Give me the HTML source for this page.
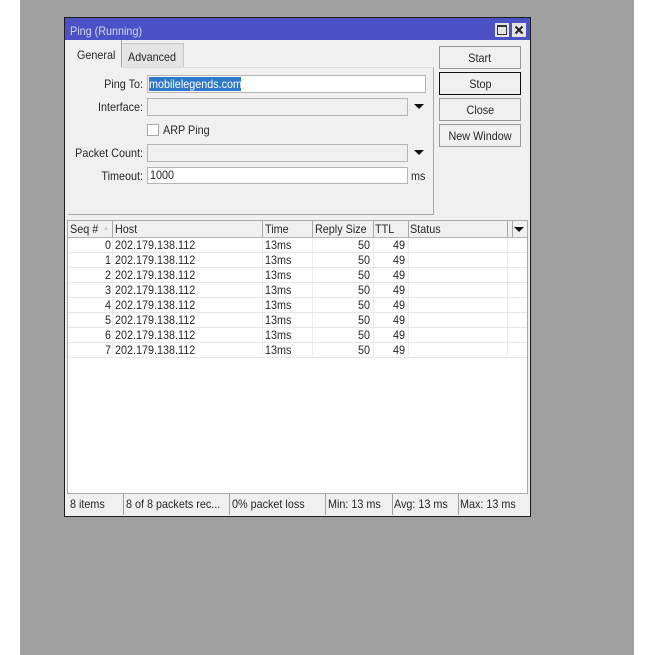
<!DOCTYPE html>
<html><head><meta charset="utf-8"><style>
html,body{margin:0;padding:0;background:#fff}
#p{position:relative;width:655px;height:655px;overflow:hidden;background:#fff;font:12px "Liberation Sans",sans-serif;color:#262626;filter:blur(.2px)}
#p div{position:absolute;box-sizing:border-box}
.t{white-space:nowrap;line-height:14px;height:14px;transform:scaleX(.9);transform-origin:left center}
.r{text-align:right;transform-origin:right center}
.f{background:#f0f0f0;border:1px solid #b4b4b4}
.w{background:#fff;border:1px solid #b4b4b4}
.b{left:439px;width:82px;height:23px;background:#f0f0f0;border:1px solid #999;text-align:center;line-height:23px}
.b span{display:inline-block;transform:scaleX(.9)}
.a{width:0;height:0;border-left:5px solid transparent;border-right:5px solid transparent;border-top:5px solid #111}
.hl{height:1px;background:#e6e6e6;left:68px;width:459px}
.v{width:1px;background:#ececec;top:238px;height:120px}
.hs{width:1px;background:#a8a8a8;top:221px;height:16px}
.ss{width:1px;background:#a0a0a0;top:494px;height:21px}
</style></head><body><div id="p">
<div style="left:20px;top:0;width:614px;height:655px;background:#a0a0a0"></div>
<div style="left:64px;top:17px;width:467px;height:500px;background:#f0f0f0;border:1px solid #1c1c1c"></div>
<div style="left:65px;top:18px;width:465px;height:22px;background:#4a52c5"></div>
<div class="t" style="left:70px;top:24px;color:#d4d7f2">Ping (Running)</div>
<div style="left:495px;top:23px;width:14px;height:14px;background:#e4e4e4"></div>
<div style="left:497px;top:25px;width:10px;height:10px;border:1px solid #333;border-top-width:2px"></div>
<div style="left:512px;top:23px;width:14px;height:14px;background:#e4e4e4"></div>
<svg style="position:absolute;left:512px;top:23px" width="14" height="14"><path d="M3.5 3.5L10.5 10.5M10.5 3.5L3.5 10.5" stroke="#222" stroke-width="2"/></svg>

<div style="left:121px;top:43px;width:63px;height:24px;background:#e4e4e4;border:1px solid #c8c8c8;border-bottom:0"></div>
<div style="left:121px;top:40px;width:1px;height:27px;background:#a8a8a8"></div>
<div class="t" style="left:77px;top:48px">General</div>
<div class="t" style="left:128px;top:50px">Advanced</div>
<div style="left:121px;top:67px;width:313px;height:148px;border-top:1px solid #dcdcdc;border-right:1px solid #a8a8a8"></div>
<div style="left:68px;top:214px;width:366px;height:1px;background:#a8a8a8"></div>

<div class="t r" style="left:40px;width:103px;top:77px">Ping To:</div>
<div class="w" style="left:147px;top:75px;width:279px;height:18px"></div>
<div style="left:149px;top:77px;width:92px;height:14px;background:#2f78c8"></div>
<div class="t" style="left:149px;top:77px;color:#fff">mobilelegends.com</div>

<div class="t r" style="left:40px;width:103px;top:100px">Interface:</div>
<div class="f" style="left:147px;top:98px;width:261px;height:18px"></div>
<div class="a" style="left:414px;top:104px"></div>

<div style="left:147px;top:124px;width:12px;height:12px;background:#fff;border:1px solid #a8a8a8"></div>
<div class="t" style="left:163px;top:123px">ARP Ping</div>

<div class="t r" style="left:40px;width:103px;top:146px">Packet Count:</div>
<div class="f" style="left:147px;top:144px;width:261px;height:18px"></div>
<div class="a" style="left:414px;top:150px"></div>

<div class="t r" style="left:40px;width:103px;top:169px">Timeout:</div>
<div class="w" style="left:147px;top:167px;width:261px;height:17px"></div>
<div class="t" style="left:150px;top:168px">1000</div>
<div class="t" style="left:411px;top:169px">ms</div>

<div class="b" style="top:46px"><span>Start</span></div>
<div class="b" style="top:72px;border-color:#111"><span>Stop</span></div>
<div class="b" style="top:98px"><span>Close</span></div>
<div class="b" style="top:124px"><span>New Window</span></div>

<div style="left:67px;top:220px;width:461px;height:274px;background:#fff;border:1px solid #a8a8a8"></div>
<div style="left:68px;top:221px;width:459px;height:16px;background:#f0f0f0"></div>
<div style="left:68px;top:237px;width:459px;height:1px;background:#b4b4b4"></div>
<div class="hs" style="left:112px"></div><div class="hs" style="left:262px"></div><div class="hs" style="left:312px"></div><div class="hs" style="left:373px"></div><div class="hs" style="left:408px"></div><div class="hs" style="left:507px"></div><div class="hs" style="left:512px"></div>
<div class="t" style="left:70px;top:222px">Seq #</div>
<div style="left:104px;top:226px;width:0;height:0;border-left:2px solid transparent;border-right:2px solid transparent;border-bottom:4px solid #c8c8c8"></div>
<div class="t" style="left:115px;top:222px">Host</div>
<div class="t" style="left:265px;top:222px">Time</div>
<div class="t" style="left:315px;top:222px">Reply Size</div>
<div class="t" style="left:375px;top:222px">TTL</div>
<div class="t" style="left:410px;top:222px">Status</div>
<div class="a" style="left:514px;top:227px"></div>

<div class="v" style="left:112px"></div><div class="v" style="left:262px"></div><div class="v" style="left:312px"></div><div class="v" style="left:373px"></div><div class="v" style="left:408px"></div><div class="v" style="left:507px"></div>
<div class="hl" style="top:252px"></div><div class="hl" style="top:267px"></div><div class="hl" style="top:282px"></div><div class="hl" style="top:297px"></div><div class="hl" style="top:312px"></div><div class="hl" style="top:327px"></div><div class="hl" style="top:342px"></div><div class="hl" style="top:357px"></div>

<div class="t r" style="left:70px;width:41px;top:238px">0</div><div class="t" style="left:115px;top:238px">202.179.138.112</div><div class="t" style="left:265px;top:238px">13ms</div><div class="t r" style="left:330px;width:40px;top:238px">50</div><div class="t r" style="left:375px;width:30px;top:238px">49</div>
<div class="t r" style="left:70px;width:41px;top:253px">1</div><div class="t" style="left:115px;top:253px">202.179.138.112</div><div class="t" style="left:265px;top:253px">13ms</div><div class="t r" style="left:330px;width:40px;top:253px">50</div><div class="t r" style="left:375px;width:30px;top:253px">49</div>
<div class="t r" style="left:70px;width:41px;top:268px">2</div><div class="t" style="left:115px;top:268px">202.179.138.112</div><div class="t" style="left:265px;top:268px">13ms</div><div class="t r" style="left:330px;width:40px;top:268px">50</div><div class="t r" style="left:375px;width:30px;top:268px">49</div>
<div class="t r" style="left:70px;width:41px;top:283px">3</div><div class="t" style="left:115px;top:283px">202.179.138.112</div><div class="t" style="left:265px;top:283px">13ms</div><div class="t r" style="left:330px;width:40px;top:283px">50</div><div class="t r" style="left:375px;width:30px;top:283px">49</div>
<div class="t r" style="left:70px;width:41px;top:298px">4</div><div class="t" style="left:115px;top:298px">202.179.138.112</div><div class="t" style="left:265px;top:298px">13ms</div><div class="t r" style="left:330px;width:40px;top:298px">50</div><div class="t r" style="left:375px;width:30px;top:298px">49</div>
<div class="t r" style="left:70px;width:41px;top:313px">5</div><div class="t" style="left:115px;top:313px">202.179.138.112</div><div class="t" style="left:265px;top:313px">13ms</div><div class="t r" style="left:330px;width:40px;top:313px">50</div><div class="t r" style="left:375px;width:30px;top:313px">49</div>
<div class="t r" style="left:70px;width:41px;top:328px">6</div><div class="t" style="left:115px;top:328px">202.179.138.112</div><div class="t" style="left:265px;top:328px">13ms</div><div class="t r" style="left:330px;width:40px;top:328px">50</div><div class="t r" style="left:375px;width:30px;top:328px">49</div>
<div class="t r" style="left:70px;width:41px;top:343px">7</div><div class="t" style="left:115px;top:343px">202.179.138.112</div><div class="t" style="left:265px;top:343px">13ms</div><div class="t r" style="left:330px;width:40px;top:343px">50</div><div class="t r" style="left:375px;width:30px;top:343px">49</div>

<div class="ss" style="left:123px"></div><div class="ss" style="left:229px"></div><div class="ss" style="left:325px"></div><div class="ss" style="left:392px"></div><div class="ss" style="left:458px"></div>
<div class="t" style="left:70px;top:497px">8 items</div>
<div class="t" style="left:126px;top:497px">8 of 8 packets rec...</div>
<div class="t" style="left:232px;top:497px">0% packet loss</div>
<div class="t" style="left:328px;top:497px">Min: 13 ms</div>
<div class="t" style="left:394px;top:497px">Avg: 13 ms</div>
<div class="t" style="left:460px;top:497px">Max: 13 ms</div>
</div></body></html>
